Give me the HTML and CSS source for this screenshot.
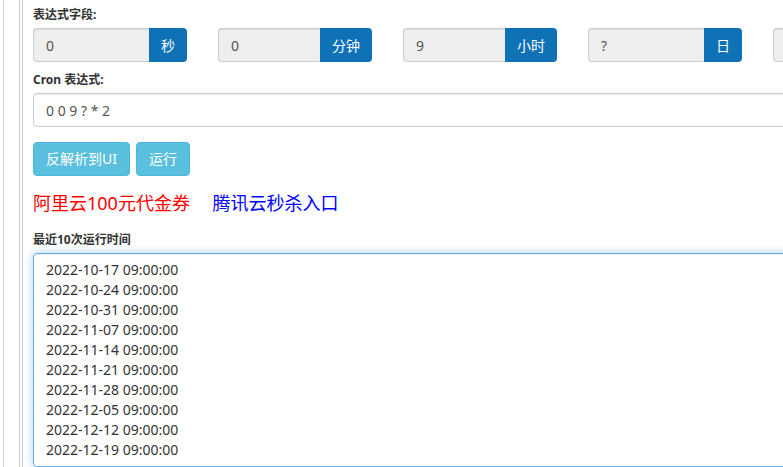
FILE: index.html
```html
<!DOCTYPE html>
<html lang="zh-CN">
<head>
    <meta charset="UTF-8">
    <title>Cron 表达式</title>
    <link rel="stylesheet" href="styles.css">
</head>
<body>
    <div class="outer">
        <div class="panel">
            <label class="field-label">表达式字段:</label>
            <div class="field-row">
                <div class="input-group">
                    <input class="form-control" type="text" value="0" readonly>
                    <span class="addon">秒</span>
                </div>
                <div class="input-group">
                    <input class="form-control" type="text" value="0" readonly>
                    <span class="addon">分钟</span>
                </div>
                <div class="input-group">
                    <input class="form-control" type="text" value="9" readonly>
                    <span class="addon">小时</span>
                </div>
                <div class="input-group">
                    <input class="form-control" type="text" value="?" readonly>
                    <span class="addon">日</span>
                </div>
                <div class="input-group">
                    <input class="form-control" type="text" value="*" readonly>
                    <span class="addon">月</span>
                </div>
                <div class="input-group">
                    <input class="form-control" type="text" value="2" readonly>
                    <span class="addon">周</span>
                </div>
            </div>

            <label class="field-label">Cron 表达式:</label>
            <input class="form-control cron-input" type="text" value="0 0 9 ? * 2">

            <div class="actions">
                <button class="btn">反解析到UI</button>
                <button class="btn">运行</button>
            </div>

            <div class="promo">
                <a href="#" class="promo-red">阿里云100元代金券</a>
                <a href="#" class="promo-blue">腾讯云秒杀入口</a>
            </div>

            <label class="field-label">最近10次运行时间</label>
            <textarea class="form-control results" rows="10">2022-10-17 09:00:00
2022-10-24 09:00:00
2022-10-31 09:00:00
2022-11-07 09:00:00
2022-11-14 09:00:00
2022-11-21 09:00:00
2022-11-28 09:00:00
2022-12-05 09:00:00
2022-12-12 09:00:00
2022-12-19 09:00:00</textarea>
        </div>
    </div>
</body>
</html>
```

FILE: styles.css
```css
html, body {
    margin: 0;
    height: 100%;
    overflow: hidden;
    background: #fff;
}
body {
    font-family: "Noto Sans", "Noto Sans CJK SC", sans-serif;
    font-size: 14px;
    color: #333;
}
.outer {
    margin-left: 3px;
    border-left: 1px solid #d4d4d4;
    padding-left: 15px;
    height: 100%;
}
.panel {
    border-left: 4px double #cfcfcf;
    padding: 6px 0 0 10px;
    width: 920px;
    height: 100%;
    box-sizing: border-box;
}
.field-label {
    display: block;
    font-size: 12px;
    font-weight: bold;
    line-height: 17px;
    margin-bottom: 5px;
    color: #333;
}
.field-row {
    display: flex;
    gap: 31px;
    margin-bottom: 9px;
}
.input-group {
    display: flex;
    width: 154px;
    flex: none;
}
.form-control {
    display: block;
    height: 34px;
    padding: 6px 12px;
    font-family: inherit;
    font-size: 14px;
    line-height: 20px;
    color: #555;
    background: #fff;
    border: 1px solid #ccc;
    border-radius: 4px;
    box-sizing: border-box;
    box-shadow: inset 0 1px 1px rgba(0,0,0,0.075);
    outline: none;
}
.input-group .form-control {
    flex: 1;
    min-width: 0;
    width: 100%;
    background: #eee;
    border-right: none;
    border-radius: 4px 0 0 4px;
}
.addon {
    display: flex;
    align-items: center;
    padding: 0 12px;
    background: #0f71b6;
    color: #fff;
    border-radius: 0 4px 4px 0;
    font-size: 14px;
}
.cron-input {
    width: 100%;
}
.actions {
    display: flex;
    gap: 6px;
    margin-top: 15px;
}
.btn {
    height: 34px;
    padding: 6px 12px;
    font-family: inherit;
    font-size: 14px;
    line-height: 20px;
    color: #fff;
    background: #5bc0de;
    border: 1px solid #46b8da;
    border-radius: 4px;
    cursor: pointer;
}
.promo {
    margin: 17px 0 18px;
    font-size: 18px;
    line-height: 20px;
}
.promo a {
    text-decoration: none;
    margin-right: 18px;
}
.promo-red {
    color: #ff0000;
}
.promo-blue {
    color: #0000ff;
}
.results {
    width: 100%;
    height: 214px;
    resize: none;
    overflow: hidden;
    color: #333;
    border-color: #66afe9;
    box-shadow: inset 0 1px 1px rgba(0,0,0,0.075), 0 0 8px rgba(102,175,233,0.6);
}
```
